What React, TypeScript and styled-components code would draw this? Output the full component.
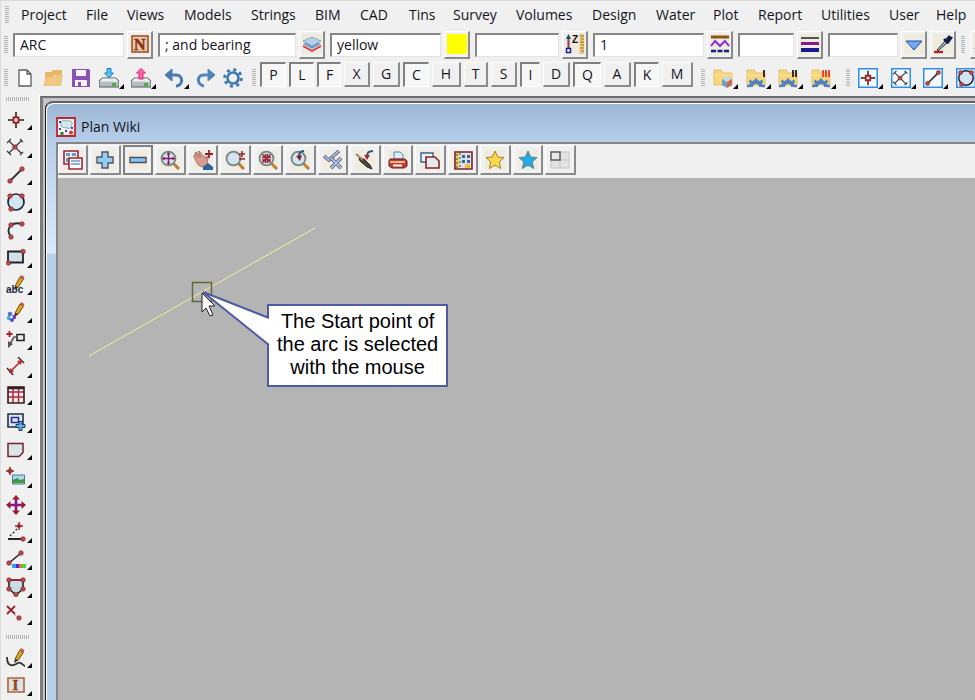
import React from "react";
import styled, { createGlobalStyle, css } from "styled-components";

const GlobalStyle = createGlobalStyle`
  * { box-sizing: border-box; }
  body { margin: 0; background: #f0f0f0; overflow: hidden; }
  button, input { font: inherit; color: inherit; }
`;

const App_ = styled.div`
  display: flex;
  flex-direction: column;
  height: 100vh;
  overflow: hidden;
  padding-left: 1px;
  border-top: 1px solid #d8d8d8;
  border-left: 1px solid #dcdcdc;
  background: #f0f0f0;
  color: #14141e;
  font-family: "Open Sans", "Noto Sans", sans-serif;
  font-size: 14px;
`;

const MenuBar = styled.nav`
  display: flex;
  flex: none;
  align-items: center;
  height: 28px;
  padding-left: 3px;
`;

const MenuItem = styled.button<{ $w: number }>`
  flex: none;
  width: ${(p) => p.$w}px;
  padding: 0;
  border: 0;
  background: none;
  line-height: 20px;
  text-align: left;
  white-space: nowrap;
`;

const Grip = styled.span<{ $across?: boolean }>`
  flex: none;
  ${(p) =>
    p.$across
      ? css`
          width: 24px;
          height: 4px;
          background: repeating-linear-gradient(90deg, #b4b4b4 0 1px, #f0f0f0 1px 2px);
        `
      : css`
          width: 4px;
          height: 18px;
          background: repeating-linear-gradient(180deg, #b4b4b4 0 1px, #f0f0f0 1px 2px);
        `}
`;

const MenuGrip = styled(Grip)`
  margin-right: 12px;
`;

const FieldBar = styled.div`
  display: flex;
  flex: none;
  align-items: center;
  gap: 5px;
  height: 31px;
  padding-left: 2px;
`;

const FieldGroup = styled.div`
  display: flex;
  flex: none;
  align-items: center;
  gap: 3px;
`;

const Field = styled.input<{ $w: number }>`
  width: ${(p) => p.$w}px;
  height: 24px;
  padding: 0 5px 1px;
  border: 1px solid #e3e3e3;
  border-top: 2px solid #868686;
  border-left: 2px solid #868686;
  border-radius: 0;
  background: #fff;
  outline: none;
`;

const raised = css`
  border: 1px solid #fff;
  border-right: 2px solid #8a8a8a;
  border-bottom: 2px solid #8a8a8a;
  background: #f0f0f0;
`;

const FieldButton = styled.button`
  ${raised}
  display: flex;
  flex: none;
  align-items: center;
  justify-content: center;
  width: 26px;
  height: 28px;
  padding: 0;
  svg { background: #efebdc; }
`;

const ToolBar = styled.div`
  display: flex;
  flex: none;
  align-items: center;
  height: 34px;
  padding: 2px 0 0 2px;
`;

const ToolButton = styled.button<{ $w: number }>`
  position: relative;
  display: flex;
  flex: none;
  align-items: center;
  width: ${(p) => p.$w}px;
  height: 24px;
  padding: 0;
  border: 0;
  background: none;
`;

const ToolGrip = styled(Grip)`
  margin-right: 8px;
`;

const FirstGrip = styled(Grip)`
  margin-right: 7px;
`;

const Letters = styled.div`
  display: flex;
  flex: none;
  gap: 3px;
  align-self: flex-start;
  margin: 0 8px 0 -4px;
`;

const Letter = styled.button<{ $w: number; $on: boolean }>`
  ${raised}
  width: ${(p) => p.$w}px;
  height: 25px;
  padding: 0;
  line-height: 20px;
  ${(p) =>
    p.$on &&
    css`
      border: 1px solid #fff;
      border-top: 2px solid #808080;
      border-left: 2px solid #808080;
      background: #f6f6f6;
    `}
`;

const Body = styled.div`
  display: flex;
  flex: 1;
  min-height: 0;
`;

const SideBar = styled.aside`
  display: flex;
  flex: none;
  flex-direction: column;
  width: 38px;
  padding: 3px 0 0 4px;
  border-right: 2px solid #fafafa;
  overflow: hidden;
`;

const SideGroup = styled.div`
  display: flex;
  flex-direction: column;
  padding: 5px 0 7px;
`;

const SideButton = styled.button`
  position: relative;
  display: flex;
  flex: none;
  align-items: center;
  width: 28px;
  height: 27px;
  padding: 0;
  border: 0;
  background: none;
  &:nth-child(even) { height: 28px; }
`;

const Corner = styled.svg`
  position: absolute;
  right: 2px;
  bottom: 3px;
`;

const ToolCorner = styled.svg`
  position: absolute;
  left: 20px;
  bottom: 1px;
`;

const Workspace = styled.main`
  display: flex;
  flex: 1;
  min-width: 0;
  margin-top: 2px;
  padding: 3px 0 0 2px;
  border-top: 2px solid #6c6c6c;
  border-left: 3px solid #7c7c7c;
  background: #c4c4c4;
`;

const PlanWindow = styled.section`
  display: flex;
  flex: 1;
  flex-direction: column;
  min-width: 0;
  padding-left: 10px;
  border-top: 2px solid #5c636b;
  border-left: 1px solid #1c1c1c;
  border-top-left-radius: 8px;
  background: linear-gradient(180deg, #9ab5d3 0, #b8d0ea 40px, #d4e4f6 130px, #dbe9f8 150px, #b7cfe9 151px);
  box-shadow: inset 1px 1px 0 #fff;
`;

const TitleBar = styled.header`
  display: flex;
  flex: none;
  align-items: center;
  gap: 5px;
  height: 39px;
  padding-top: 8px;
`;

const Title = styled.h1`
  margin: 0;
  font-size: 14px;
  font-weight: 400;
  line-height: 20px;
`;

const Client = styled.div`
  display: flex;
  flex: 1;
  flex-direction: column;
  min-height: 0;
  border-top: 2px solid #858585;
  border-left: 2px solid #858585;
`;

const ViewBar = styled.div`
  display: flex;
  flex: none;
  gap: 2px;
  height: 34px;
  padding-top: 1px;
  background: #f0f0f0;
`;

const ViewButton = styled.button<{ $focus: boolean }>`
  ${raised}
  display: flex;
  flex: none;
  align-items: center;
  justify-content: center;
  width: 30px;
  height: 30px;
  padding: 0;
  &:nth-child(even) { width: 31px; }
  ${(p) => p.$focus && css`border: 2px solid #808080;`}
  svg { background: #efebdf; }
  &:last-child svg { background: none; }
`;

const Canvas = styled.div`
  position: relative;
  flex: 1;
  min-height: 0;
  overflow: hidden;
  background: #b4b4b4;
`;

const Drawing = styled.svg`
  position: absolute;
  left: 0;
  top: 0;
`;

const Callout = styled.p`
  position: absolute;
  left: 209px;
  top: 126px;
  margin: 0;
  padding: 4px 8px 6px;
  border: 2px solid #4f5aa6;
  background: #fff;
  color: #000;
  font: 20px/23px "Liberation Sans", Arial, sans-serif;
  text-align: center;
  white-space: pre-line;
`;

type IconProps = { size?: number; children: React.ReactNode };
const Icon = ({ size = 20, children }: IconProps) => (
  <svg width={size} height={size} viewBox="0 0 20 20" fill="none" aria-hidden="true">
    {children}
  </svg>
);

const Dot = ({ x, y }: { x: number; y: number }) => (
  <circle cx={x} cy={y} r="2.3" fill="#b8484a" stroke="#7e2428" strokeWidth=".6" />
);
const triangle = <path d="M5 0V5H0Z" fill="#000" />;
const SideCorner = () => <Corner width="5" height="5">{triangle}</Corner>;
const BarCorner = () => <ToolCorner width="5" height="5">{triangle}</ToolCorner>;

const Pencil = () => (
  <>
    <path d="M9 11 14 2l3.5 2L12 12.500Z" fill="#e0a51c" stroke="#6d4d12" />
    <path d="m14 2 1-2 3.500 2-1 2Z" fill="#c45a50" />
    <path d="m9 11-1 4 4-2.500Z" fill="#302820" />
  </>
);
const PointMark = () => (
  <>
    <path d="M10 2v5M10 13v5M2 10h5M13 10h5" stroke="#2a2020" strokeWidth="1.6" />
    <path d="M7.500 7.500h5v5h-5z" fill="#fff" stroke="#a52025" strokeWidth="2" />
  </>
);
const CrossMark = () => (
  <>
    <path d="M3 4 16 17M16 3 3 16M1 6l4-4M14 2l3 3M1 14l4 4M14 18l3-3" stroke="#383838" strokeWidth="1.200" />
    <Dot x={9} y={10} />
  </>
);
const LineMark = () => (
  <>
    <path d="M3 17 16 4" stroke="#303030" strokeWidth="1.800" />
    <Dot x={4} y={16} />
    <Dot x={16} y={4} />
  </>
);
const CircleMark = () => (
  <>
    <circle cx="10" cy="10" r="8" fill="#d4e5f2" stroke="#202a30" strokeWidth="1.700" />
    <Dot x={4} y={4} />
    <Dot x={16} y={4} />
    <Dot x={5} y={17} />
  </>
);

const sideIcons: { name: string; art: React.ReactNode }[] = [
  { name: "Point", art: <PointMark /> },
  { name: "Intersect", art: <CrossMark /> },
  { name: "Line", art: <LineMark /> },
  { name: "Circle", art: <CircleMark /> },
  {
    name: "Arc",
    art: (
      <>
        <path d="M5 17C0 9 5 1 16 4L8 9Z" fill="#e4eef5" />
        <path d="M5 17C-1 9 5 1 16 4" stroke="#26303a" strokeWidth="1.800" />
        <Dot x={5} y={17} /><Dot x={5} y={5} /><Dot x={16} y={4} />
      </>
    ),
  },
  {
    name: "Rectangle",
    art: (
      <>
        <path d="M2 4.500h15v11H2z" fill="#cfe0e6" stroke="#202428" strokeWidth="1.800" />
        <Dot x={2.500} y={16} /><Dot x={17} y={4.500} />
      </>
    ),
  },
  {
    name: "Text",
    art: (
      <>
        <Pencil />
        <text x="0" y="18" fill="#1c2c3c" fontFamily="Liberation Sans, sans-serif" fontWeight="700" fontSize="10">abc</text>
      </>
    ),
  },
  {
    name: "Paint",
    art: (
      <>
        <Pencil />
        <circle cx="4" cy="12" r="2.200" fill="#5b67e0" /><circle cx="8" cy="15" r="2.200" fill="#7a35c4" />
        <circle cx="3" cy="16" r="2.200" fill="#45a5dc" /><circle cx="6" cy="18" r="2" fill="#4450cf" />
        <circle cx="5.500" cy="15" r="1.300" fill="#fff" />
      </>
    ),
  },
  {
    name: "Leader",
    art: (
      <>
        <path d="M3.500 1v6M.5 4h6" stroke="#b0181e" strokeWidth="1.800" />
        <path d="M11 4.500h7v6h-7z" fill="#e4edf2" stroke="#222" strokeWidth="1.600" />
        <path d="M11 7H8L4 14" stroke="#555" strokeWidth="1.600" />
        <path d="m2 18 0-7 5 3Z" fill="#555" />
      </>
    ),
  },
  {
    name: "Dimension",
    art: (
      <>
        <path d="M1 11l6 7M12 0l6 6" stroke="#333" strokeWidth="1.500" />
        <path d="M5 14 14 5" stroke="#c02024" strokeWidth="1.600" />
        <path d="m3 16 1-5 4 4ZM16 3l-5 1 4 4Z" fill="#c02024" />
      </>
    ),
  },
  {
    name: "Table",
    art: (
      <>
        <path d="M2 2h16v16H2z" fill="#f4e9e9" />
        <path d="M2 7h16M2 12h16M7 2v16M12.500 2v16" stroke="#b02a42" strokeWidth="1.500" />
        <path d="M2 2h16v16H2z" stroke="#302024" strokeWidth="1.600" />
        <path d="M2 3h16" stroke="#302024" strokeWidth="2.500" />
      </>
    ),
  },
  {
    name: "Add view",
    art: (
      <>
        <path d="M2 2h15v13H2z" fill="#dde8ef" stroke="#26303a" strokeWidth="1.600" />
        <path d="M5.500 5.500h7v5h-7z" stroke="#2527a5" strokeWidth="1.600" />
        <path d="M13 9.500h3v3h3v3h-3v3h-3v-3h-3v-3h3z" fill="#64aee0" stroke="#1c3e70" />
      </>
    ),
  },
  { name: "Polygon", art: <path d="M2 3.500h15v9l-4 4H2z" fill="#d8e6ea" stroke="#70242a" strokeWidth="1.500" /> },
  {
    name: "Image",
    art: (
      <>
        <path d="M4 0v8M0 4h8" stroke="#9b2228" strokeWidth="1.500" /><circle cx="4" cy="4" r="2" stroke="#9b2228" />
        <path d="M6.500 8h12v9h-12z" fill="#aad8f5" stroke="#52778e" />
        <path d="m7 16 0-3 4-2 3 2 4-1v4z" fill="#3f9c38" />
      </>
    ),
  },
  {
    name: "Move",
    art: (
      <>
        <path d="M10 3v14M3 10h14" stroke="#8a1787" strokeWidth="2.600" />
        <path d="m10 0 4 4.500H6ZM10 20l4-4.500H6ZM0 10l4.500-4v8ZM20 10l-4.500-4v8Z" fill="#94202a" />
      </>
    ),
  },
  {
    name: "Angle point",
    art: (
      <>
        <path d="M2 17h15" stroke="#252525" strokeWidth="2" /><path d="M4 14 12 6" stroke="#333" strokeWidth="1.500" strokeDasharray="2 2" />
        <path d="M13 0v8M9 4h8" stroke="#9b2228" strokeWidth="1.400" /><circle cx="13" cy="4" r="2" fill="#9b2228" /><Dot x={17} y={17} />
      </>
    ),
  },
  {
    name: "Colour line",
    art: (
      <>
        <path d="M3 13 15 3" stroke="#222" strokeWidth="1.600" /><Dot x={3} y={13} /><Dot x={15} y={3} />
        <path d="M6 14h4v4H6z" fill="#2aa0f4" /><path d="M10 14h3v4h-3z" fill="#5b22cf" />
        <path d="M13 14h3v4h-3z" fill="#f56a30" /><path d="M16 14h4v4h-4z" fill="#45d936" />
      </>
    ),
  },
  {
    name: "Shape",
    art: (
      <>
        <path d="M3 3h14v9l-7 6-7-6z" fill="#c8dde6" stroke="#222" strokeWidth="1.600" />
        <path d="M3 3h14" stroke="#a52025" strokeWidth="1.600" />
        <Dot x={3} y={3} /><Dot x={17} y={3} /><Dot x={3} y={12} /><Dot x={17} y={12} /><Dot x={10} y={17.500} />
      </>
    ),
  },
  {
    name: "Delete point",
    art: (
      <>
        <path d="m1 1 8 8M9 1 1 9" stroke="#982028" strokeWidth="1.800" />
        <path d="m8 9 4 4" stroke="#777" strokeDasharray="1 1" /><Dot x={13} y={13} />
      </>
    ),
  },
];

const Drive = ({ up }: { up?: boolean }) => (
  <>
    <path d="m3 10-3 3v6h20v-6l-3-3z" fill="#b9bcc0" stroke="#55585c" />
    <path d="M1 13.500h18l-2-3H3z" fill="#eceef0" /><path d="M13 16.500h4" stroke="#37b62e" strokeWidth="2.600" />
    {up ? (
      <path d="m10 .5 4.500 4.500H12v6H8V5H5.500z" fill="#ff65a4" stroke="#ed1e79" />
    ) : (
      <path d="M8 .5h4V5h2.500L10 10 5.500 5H8z" fill="#58bff0" stroke="#1f83c0" />
    )}
  </>
);

const Gear = () => (
  <>
    <circle cx="10" cy="10" r="5.500" stroke="#3d77b6" strokeWidth="2.600" />
    <circle cx="10" cy="10" r="8.300" stroke="#3d77b6" strokeWidth="3" strokeDasharray="3 3.520" />
  </>
);

const fileTools: { name: string; w: number; more?: boolean; art: React.ReactNode }[] = [
  { name: "New", w: 28, art: <path d="M4 2h8l4 4v12H4zM12 2v4h4" fill="#fff" stroke="#5e5e5e" strokeWidth="1.300" /> },
  {
    name: "Open", w: 28,
    art: (<><path d="M2 17V4h6l2-2h9v12" fill="#e9b566" /><path d="m0 18 3-9h6l2-2h9l-2 11z" fill="#f1c883" /></>),
  },
  {
    name: "Save", w: 28,
    art: (<><path d="M1 1h17l1 1v17H1z" fill="#8a52b4" /><path d="M5 2h10v6H5zM4 12h12v6H4z" fill="#f8f4fa" /><path d="M7 14h3v4H7z" fill="#8a52b4" /></>),
  },
  { name: "Import", w: 32, more: true, art: <Drive /> },
  { name: "Export", w: 33, more: true, art: <Drive up /> },
  {
    name: "Undo", w: 32, more: true,
    art: (<><path d="M5 7h7c8 0 7 11 0 11" stroke="#4779b3" strokeWidth="3" /><path d="m1 7 7-6v4L6 7l2 2v4z" fill="#4779b3" stroke="#4779b3" /></>),
  },
  {
    name: "Redo", w: 27,
    art: (<><path d="M15 7H8c-8 0-7 10 0 11" stroke="#4e84bd" strokeWidth="3" /><path d="m19 7-7-6v4l2 2-2 2v4z" fill="#4e84bd" stroke="#4e84bd" /></>),
  },
  { name: "Settings", w: 29, art: <Gear /> },
];

const Folder = ({ bars = 0, red }: { bars?: number; red?: boolean }) => (
  <>
    <path d="M1 2h7l2 3h9v12H1z" fill="#f7d67c" stroke="#e8c060" />
    <path d="M1 7h18" stroke="#fbe7b0" />
    {bars === 0 ? (
      <>
        <path d="m9 11 5-3 5 3-5 3z" fill="#bcd9e6" /><path d="m9 11 5 3v6l-5-3z" fill="#6aa2c6" /><path d="m19 11-5 3v6l5-3z" fill="#d0674e" />
      </>
    ) : (
      <>
        <path d="M3 19a7 7 0 0 1 14 0h-4a3 3 0 0 0-6 0z" fill="#4f80c2" />
        <path d="M10 14v-3.500M6 15l-2.500-2.500M14 15l2.500-2.500M4 18H1M16 18h3" stroke="#4f80c2" strokeWidth="2.600" />
        {Array.from({ length: bars }, (_, i) => (
          <path key={i} d={`M${18 - i * 3} 2v7`} stroke={red ? "#f02a1c" : "#111"} strokeWidth="1.700" />
        ))}
      </>
    )}
  </>
);

const Boxed = ({ children }: { children: React.ReactNode }) => (
  <>
    <path d="M.75.75h18.500v18.500H.75z" fill="#f4f8fb" stroke="#2a8ff0" strokeWidth="1.500" />
    <g transform="translate(1 1) scale(.9)">{children}</g>
  </>
);

const Lens = ({ children }: { children?: React.ReactNode }) => (
  <>
    <path d="m13 13 6 6" stroke="#b98038" strokeWidth="3" />
    <circle cx="8.500" cy="8.500" r="6.900" fill="#d3e4ec" stroke="#75838b" strokeWidth="1.800" />
    {children}
  </>
);

const star = "m10 1 2.700 6 6.300.6-4.800 4.300 1.500 6.600-5.700-3.400-5.700 3.400 1.500-6.600L1 7.600 7.300 7z";

const viewIcons: { name: string; art: React.ReactNode }[] = [
  {
    name: "Views",
    art: (<><path d="M1 1h14v13H1z" fill="#e8f0f8" stroke="#a02530" strokeWidth="1.600" /><path d="M3 3h4v3H3zM9 3h4v3H9zM3 8h3v4H3z" fill="#6899cc" /><path d="M6 8h13v11H6z" fill="#fff" stroke="#a02530" strokeWidth="1.600" /><path d="M8 11h9M8 14h9" stroke="#6899cc" strokeWidth="1.500" /></>),
  },
  { name: "Add", art: <path d="M7 2h6v5h5v6h-5v5H7v-5H2V7h5z" fill="#8fd0f2" stroke="#55506c" strokeWidth="1.400" /> },
  { name: "Remove", art: <path d="M2 7.500h16v5H2z" fill="#86c8ee" stroke="#4b4b68" strokeWidth="1.400" /> },
  { name: "Fit", art: <Lens><path d="M8.500 3v11M3 8.500h11" stroke="#8c1862" strokeWidth="1.500" /><path d="m8.500 2 2 2.500h-4zM8.500 15l2-2.500h-4zM2 8.500l2.500-2v4zM15 8.500l-2.500-2v4z" fill="#8c1862" /></Lens> },
  {
    name: "Pan",
    art: (<><path d="M1 5q1-1 2 0l3 3-4-5q1-2 2 0l4 4-3-5q1-2 2 0l6 7 0-3q2 0 2 3l-1 5-4 3q-4 0-6-4L1 7z" fill="#d99a8f" stroke="#98645c" strokeWidth=".8" /><path d="m10 17 5-4 5 4v3H10z" fill="#2b62a2" /><path d="M16 0v8M12 4h8" stroke="#9a1c28" strokeWidth="1.800" /></>),
  },
  { name: "Zoom", art: <><Lens /><path d="M14 4h6M17 1v6M14 9h6" stroke="#a52025" strokeWidth="1.500" /></> },
  { name: "Shrink", art: <Lens><path d="m4.500 4.500 8 8M12.500 4.500l-8 8" stroke="#9a2028" strokeWidth="1.500" /><path d="M4 7.500h3.500V4M13 7.500H9.500V4M4 10h3.500v3M13 10H9.500v3" stroke="#9a2028" strokeWidth="1.500" /></Lens> },
  { name: "Zoom previous", art: <Lens><path d="M14 1c-3 0-5 2-5 5" stroke="#235a8c" strokeWidth="2" /><path d="m6 6 6-1-2 6z" fill="#8a2028" /></Lens> },
  {
    name: "Toggle",
    art: (<><path d="m1 6 5 4L16 1" stroke="#7b3b5a" strokeWidth="3.400" /><path d="m1 6 5 4L16 1" stroke="#8cc2e8" strokeWidth="2.200" /><path d="m8 8 10 10M18 8 8 18" stroke="#7b3b5a" strokeWidth="3.600" /><path d="m8 8 10 10M18 8 8 18" stroke="#90c6ec" strokeWidth="2.400" /></>),
  },
  {
    name: "Redraw",
    art: (<><path d="m4 8 5 1 6 6 2 4-5-2-7-6z" fill="#4b4640" stroke="#28241f" /><path d="m1 4 7 6" stroke="#a1845e" strokeWidth="2" /><path d="M18 1c-4 0-6 2-6 5" stroke="#235a8c" strokeWidth="2" /><path d="m9 5 6 0-3 5z" fill="#b32228" /></>),
  },
  {
    name: "Print",
    art: (<><path d="M6 9V2h6l3 3v4z" fill="#dcecfb" stroke="#4f84bc" /><path d="M2 9h15l2 2v5l-3 2H4l-3-2v-5z" fill="#c33a36" stroke="#66201f" /><path d="M2 12h15" stroke="#f7dc90" strokeWidth="1.600" /><path d="M5 15.500h9" stroke="#fff" strokeWidth="2" /></>),
  },
  {
    name: "Copy",
    art: (<><path d="M1 3h12v9H1z" fill="#eef5fa" stroke="#31658d" strokeWidth="1.400" /><path d="M6 7h9l4 4v7H6z" fill="#e1eaee" stroke="#8c2228" strokeWidth="1.600" /></>),
  },
  {
    name: "Plot layout",
    art: (<><path d="M2 2h17v17H2z" fill="#d5e4ee" stroke="#802028" strokeWidth="1.600" /><path d="M3 3h3v15H3z" fill="#ecd445" /><path d="M4 4v15M7 3v15" stroke="#444" strokeDasharray="2 2" /><path d="M9 5h3v3H9zM14 5h3v3h-3zM9 10h3v3H9zM14 10h3v3h-3z" fill="#42658e" /><path d="M12 14h5v4h-5z" fill="#edc238" /></>),
  },
  { name: "Favourites", art: <path d={star} fill="#fadb4b" stroke="#a97e30" /> },
  { name: "Shared favourites", art: <path d={star} fill="#20a9e4" stroke="#5e8190" /> },
  {
    name: "Layout",
    art: (<><path d="M1 2h18v16H1zM10 2v16M1 10h18" fill="#e2e2e2" stroke="#c4c4c4" /><path d="M1 2h9v8H1z" fill="#e8e8e8" stroke="#606060" strokeWidth="1.500" /></>),
  },
];

const LayersIcon = <Icon><path d="M1 12l9 5 9-5" stroke="#d2333d" strokeWidth="1.800" /><path d="m1 10 9-4 9 4-9 5z" fill="#6c9cc6" /><path d="m1 7 9-4 9 4-9 5z" fill="#b4d0e6" stroke="#6f96b8" strokeWidth=".7" /></Icon>;
const NameIcon = (
  <Icon>
    <path d="M2 2h16v16H2z" fill="#e7c7ae" stroke="#9c4c24" strokeWidth="1.500" />
    <text x="4" y="15.500" fill="#8a3412" stroke="#8a3412" strokeWidth=".5" fontFamily="Liberation Serif, serif" fontWeight="700" fontSize="16">N</text>
  </Icon>
);
const HeightIcon = (
  <Icon>
    <path d="M14.500 0H19v20h-4.500z" fill="#e9c67a" />
    <path d="M19 2h-4M19 5h-3M19 8h-4M19 11h-3M19 14h-4M19 17h-3" stroke="#a87832" />
    <path d="M3.500 15V3" stroke="#33609c" strokeWidth="1.800" /><path d="m3.500 0 2.500 5H1z" fill="#29456e" /><path d="M3.500 6v9" stroke="#b3333a" strokeWidth="1.500" /><path d="M1.500 14.500h4v4h-4z" fill="#fff" stroke="#20208a" strokeWidth="1.500" />
    <text x="7" y="8.500" fill="#111" fontFamily="Liberation Sans, sans-serif" fontWeight="700" fontSize="10">Z</text>
  </Icon>
);
const fields: { label: string; w: number; value: string; button: string; art: React.ReactNode }[] = [
  { label: "Name", w: 111, value: "ARC", button: "Pick name", art: NameIcon },
  { label: "Model", w: 138, value: "; and bearing", button: "Pick model", art: LayersIcon },
  { label: "Colour", w: 111, value: "yellow", button: "Pick colour", art: <Icon><path d="M0 0h20v20H0z" fill="#ff0" /></Icon> },
  { label: "Height", w: 84, value: "", button: "Pick height", art: HeightIcon },
  {
    label: "Line style", w: 111, value: "1", button: "Pick line style",
    art: <Icon><path d="M1 3h18" stroke="#8a5420" strokeWidth="3" /><path d="m1 12 4-5 5 5 5-5 4 5" stroke="#8a2be2" strokeWidth="2" /><path d="M1 17h18" stroke="#131c8c" strokeWidth="2.600" strokeDasharray="5 1.500" /></Icon>,
  },
  {
    label: "Weight", w: 56, value: "", button: "Pick weight",
    art: <Icon><path d="M1 4h18" stroke="#20242c" strokeWidth="1.500" /><path d="M1 9.500h18" stroke="#8a1787" strokeWidth="3" /><path d="M1 16h18" stroke="#121c90" strokeWidth="4" /></Icon>,
  },
  {
    label: "Tinable", w: 70, value: "", button: "Pick tinable",
    art: <Icon><path d="M2 7h16l-8 9z" fill="#72a8f0" stroke="#1e4eaa" /></Icon>,
  },
];

const menus: [string, number][] = [
  ["Project", 65], ["File", 41], ["Views", 57], ["Models", 67], ["Strings", 64], ["BIM", 45], ["CAD", 49], ["Tins", 44],
  ["Survey", 63], ["Volumes", 76], ["Design", 64], ["Water", 57], ["Plot", 45], ["Report", 63], ["Utilities", 68], ["User", 47], ["Help", 40],
];

const letters: [string, number, boolean][] = [
  ["P", 26, true], ["L", 25, true], ["F", 24, true], ["X", 26, false], ["G", 27, false], ["C", 26, true], ["H", 29, false], ["T", 24, false],
  ["S", 26, false], ["I", 20, true], ["D", 27, false], ["Q", 28, true], ["A", 27, false], ["K", 25, true], ["M", 31, false],
];

const folderTools = [
  { name: "Project folder", w: 33, art: <Folder /> },
  { name: "Chain one", w: 32, art: <Folder bars={1} /> },
  { name: "Chain two", w: 33, art: <Folder bars={2} /> },
  { name: "Chain three", w: 35, art: <Folder bars={3} red /> },
];

const snapTools = [
  { name: "Snap point", w: 33, art: <Boxed><PointMark /></Boxed> },
  { name: "Snap intersection", w: 32, art: <Boxed><CrossMark /></Boxed> },
  { name: "Snap line", w: 33, art: <Boxed><LineMark /></Boxed> },
  { name: "Snap circle", w: 32, art: <Boxed><CircleMark /></Boxed> },
];

export default function App() {
  return (
    <App_>
      <GlobalStyle />
      <MenuBar aria-label="Main menu">
        <MenuGrip />
        {menus.map(([name, w]) => (
          <MenuItem key={name} $w={w}>{name}</MenuItem>
        ))}
      </MenuBar>
      <FieldBar>
        <Grip />
        {fields.map((f) => (
          <FieldGroup key={f.label}>
            <Field aria-label={f.label} $w={f.w} defaultValue={f.value} />
            <FieldButton aria-label={f.button}>{f.art}</FieldButton>
            {f.label === "Tinable" && (
              <FieldButton aria-label="Pick from string">
                <Icon>
                  <path d="m4 16 8-9 2 2-9 8z" fill="#9db6c4" stroke="#333" />
                  <path d="m11 5 4 4M13 7l3-4 2 1-3 4z" fill="#151d4c" stroke="#151d4c" strokeWidth="2.600" />
                  <path d="M1 18h9" stroke="#b3242a" strokeWidth="2.400" />
                </Icon>
              </FieldButton>
            )}
          </FieldGroup>
        ))}
        <Grip />
        <FieldButton aria-label="Attributes">
          <Icon><path d="m1 15 7-9 4 9z" fill="#8a74cf" /></Icon>
        </FieldButton>
      </FieldBar>
      <ToolBar>
        <FirstGrip />
        {fileTools.map((t) => (
          <ToolButton key={t.name} $w={t.w} aria-label={t.name}>
            <Icon>{t.art}</Icon>
            {t.more && <BarCorner />}
          </ToolButton>
        ))}
        <ToolGrip />
        <Letters>
          {letters.map(([name, w, on]) => (
            <Letter key={name} $w={w} $on={on} aria-pressed={on}>{name}</Letter>
          ))}
        </Letters>
        <ToolGrip />
        {folderTools.map((t) => (
          <ToolButton key={t.name} $w={t.w} aria-label={t.name}><Icon>{t.art}</Icon><BarCorner /></ToolButton>
        ))}
        <ToolGrip />
        {snapTools.map((t) => (
          <ToolButton key={t.name} $w={t.w} aria-label={t.name}><Icon>{t.art}</Icon><BarCorner /></ToolButton>
        ))}
      </ToolBar>
      <Body>
        <SideBar>
          <Grip $across />
          <SideGroup>
            {sideIcons.map((s) => (
              <SideButton key={s.name} aria-label={s.name}><Icon>{s.art}</Icon><SideCorner /></SideButton>
            ))}
          </SideGroup>
          <Grip $across />
          <SideGroup>
            <SideButton aria-label="Freehand">
              <Icon><Pencil /><path d="M1 9c0 12 8 8 11 6s5 3 7 3" stroke="#30342c" strokeWidth="1.800" /></Icon><SideCorner />
            </SideButton>
            <SideButton aria-label="Information">
              <Icon>
                <path d="M2 3h16v14H2z" fill="#d8e4e6" stroke="#ad6136" strokeWidth="1.600" />
                <text x="6.500" y="15" fill="#96441c" stroke="#96441c" strokeWidth=".5" fontFamily="Liberation Serif, serif" fontWeight="700" fontSize="15">I</text>
              </Icon>
              <SideCorner />
            </SideButton>
          </SideGroup>
        </SideBar>
        <Workspace>
          <PlanWindow>
            <TitleBar>
              <Icon>
                <path d="M1 1h18v18H1z" fill="#f3f8fa" stroke="#c9202c" strokeWidth="1.800" />
                <path d="M5 5c2-3 5-1 6-1s6-1 5 3-2 5-5 4-7 1-6-6z" fill="#cfe9ed" stroke="#7ba7ae" />
                <path d="M3 4h2v2H3zM3 11h2v2H3zM9 13h2v2H9zM15 10h2v2h-2z" fill="#7424a0" />
                <circle cx="6" cy="16.500" r="1.800" fill="#258a38" /><circle cx="15" cy="15.500" r="2" fill="#e3362c" />
              </Icon>
              <Title>Plan Wiki</Title>
            </TitleBar>
            <Client>
              <ViewBar>
                {viewIcons.map((v) => (
                  <ViewButton key={v.name} $focus={v.name === "Remove"} aria-label={v.name}><Icon>{v.art}</Icon></ViewButton>
                ))}
              </ViewBar>
              <Canvas>
                <Callout>{"The Start point of\nthe arc is selected\nwith the mouse"}</Callout>
                <Drawing width="400" height="220" fill="none" aria-hidden="true">
                  <path d="M31 178 257 50" stroke="#e2e39a" strokeWidth="1.200" />
                  <path d="M134.500 104.500h19v19h-19z" stroke="#66663a" strokeWidth="1.500" />
                  <path d="M211 140 145 114l66 53" fill="#fff" stroke="#4f5aa6" strokeWidth="2" />
                  <path d="M144 115v19l4-4 4 8 3-1-4-9h6z" fill="#fff" stroke="#222" />
                </Drawing>
              </Canvas>
            </Client>
          </PlanWindow>
        </Workspace>
      </Body>
    </App_>
  );
}
